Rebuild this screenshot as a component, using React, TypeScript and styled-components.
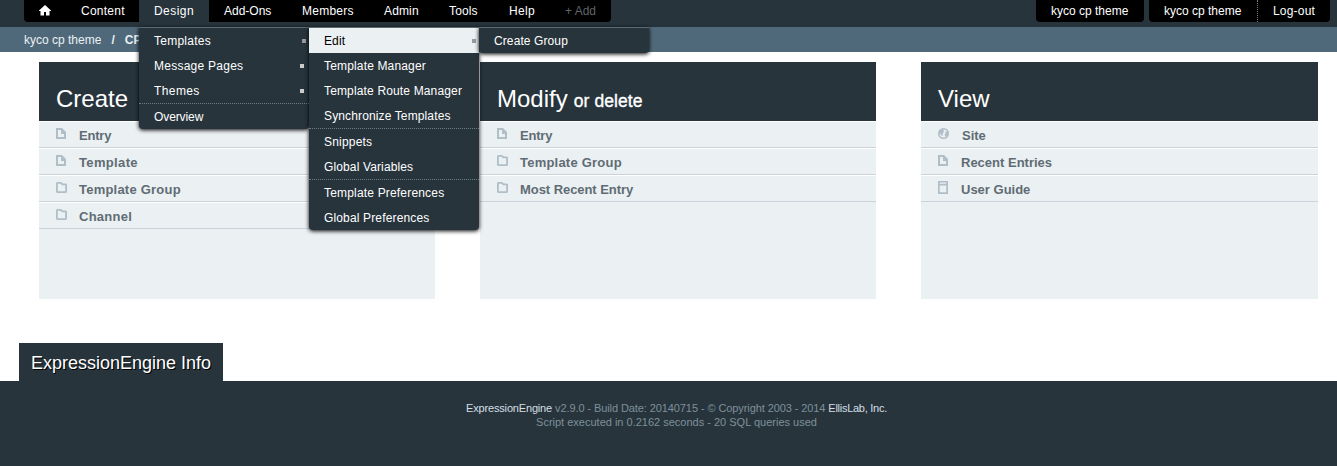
import React from 'react';
import styled, { createGlobalStyle, css } from 'styled-components';

const Global = createGlobalStyle`
  * { box-sizing: border-box; }
  body { margin: 0; background: #fff; font: 12px/25px "Liberation Sans", Arial, sans-serif; overflow: hidden; }
  a { color: inherit; text-decoration: none; }
  ul { list-style: none; margin: 0; padding: 0; }
`;

const Page = styled.div`
  height: 466px;
  display: flex;
  flex-direction: column;
  overflow: hidden;
`;
const TopBar = styled.header`
  height: 27px;
  flex: none;
  display: flex;
  justify-content: space-between;
  background: #27343c;
  padding: 0 7px 0 24px;
`;
const NavGroup = styled.ul`
  display: flex;
  height: 22px;
  background: #000;
  border-radius: 0 0 4px 4px;
`;
const NavItem = styled.li<{ $w: number; $open?: boolean; $muted?: boolean; $divided?: boolean }>`
  width: ${p => p.$w}px;
  height: ${p => (p.$open ? 27 : 22)}px;
  padding-left: 15px;
  line-height: 22px;
  position: relative;
  white-space: nowrap;
  color: ${p => (p.$muted ? '#5f6468' : '#fff')};
  ${p => p.$open && css`background: #27343c;`}
  ${p => p.$divided && css`border-left: 1px dotted #777;`}
`;
const Account = styled.div`
  display: flex;
  gap: 5px;
`;
const Text = styled.span<{ $ls?: number }>`
  letter-spacing: ${p => p.$ls ?? 0}px;
`;
const Menu = styled.ul<{ $x: number; $y: number; $w: number }>`
  position: absolute;
  left: ${p => p.$x}px;
  top: ${p => p.$y}px;
  width: ${p => p.$w}px;
  z-index: 5;
  background: #27343c;
  border-top: 1px solid #5b6970;
  border-radius: 0 0 4px 4px;
  box-shadow: 0 1px 4px #000;
`;
const MenuItem = styled.li<{ $active?: boolean; $divided?: boolean; $arrow?: 'idle' | 'open' }>`
  position: relative;
  height: ${p => (p.$divided ? 26 : 25)}px;
  padding-left: 15px;
  line-height: 27px;
  color: #fff;
  ${p => p.$active && css`background: #ebf0f3; color: #000;`}
  ${p => p.$divided && css`border-top: 1px dotted #6b7980;`}
  ${p => p.$arrow && css`
    &::after {
      content: '';
      position: absolute;
      top: 11px;
      right: ${p.$arrow === 'open' ? 3 : 5}px;
      width: 4px;
      height: 4px;
      background: ${p.$arrow === 'open' ? '#999' : '#ccc'};
    }
  `}
`;
const Crumbs = styled.nav`
  height: 25px;
  flex: none;
  display: flex;
  gap: 10px;
  padding-left: 24px;
  color: #ebf0f3;
  background: #50697a;
  line-height: 26px;
`;
const Panels = styled.main`
  flex: none;
  height: 291px;
  padding: 10px 19px 0 39px;
  display: grid;
  grid-template-columns: 396px 396px 397px;
  grid-template-rows: 237px;
  column-gap: 45px;
`;
const Panel = styled.section`
  background: #ebf0f3;
`;
const PanelTitle = styled.h2`
  margin: 0;
  height: 59px;
  padding: 22px 0 0 17px;
  background: #27343c;
  color: #fff;
  font-size: 24px;
  font-weight: 400;
  line-height: 30px;
  white-space: nowrap;
  small {
    margin-left: 1px;
    font-size: 17.500px;
    letter-spacing: .1px;
    -webkit-text-stroke: .35px #fff;
  }
`;
const Row = styled.li`
  height: 27px;
  display: flex;
  align-items: flex-start;
  padding-left: 17px;
  border-top: 1px solid #fff;
  border-bottom: 1px solid #cbd3da;
  color: #5f6c74;
  font-size: 13px;
  font-weight: 700;
  line-height: 27px;
`;
const IconBox = styled.span<{ $wide?: boolean }>`
  flex: none;
  width: ${p => (p.$wide ? 24 : 23)}px;
  height: 25px;
  svg { display: block; margin-top: 5px; }
`;
const InfoTab = styled.div`
  flex: none;
  width: 204px;
  height: 38px;
  margin-left: 19px;
  padding-left: 12px;
  background: #27343c;
  color: #fff;
  font-size: 18px;
  line-height: 40px;
  text-shadow: 1px 1px 0 #000;
  white-space: nowrap;
`;
const Footer = styled.footer`
  flex: 1;
  padding: 20px 0 0 16px;
  background: #27343c;
  color: #7f909a;
  font-size: 11px;
  line-height: 14px;
  text-align: center;
`;
const FooterLink = styled.a<{ $ls: number }>`
  color: #d5dfe5;
  letter-spacing: ${p => p.$ls}px;
`;

const HomeSlot = styled.div`
  padding-top: 5px;
  svg { display: block; }
`;
const HomeIcon = () => (
  <svg width="12" height="11" viewBox="0 0 12 11">
    <path fill="#fff" d="M6 0 12 5.500V6h-1.500v4.500H7V7H5v3.500H1.500V6H0v-.5z" />
  </svg>
);

type IconName = 'file' | 'folder' | 'globe' | 'book';
const Icon = ({ name }: { name: IconName }) => (
  <svg width="12" height="14" viewBox="0 0 12 14" fill="#b0bec8" fillRule="evenodd">
    {name === 'file' && <path d="M0 1h6l4 4v7H0zM2 3v7h6V7H5V3z" />}
    {name === 'folder' && <path d="M0 2l1-1h4l2 1.500h3l1 1V11l-1 1H1l-1-1zM1.800 2.800v7.400h7.400V4.300H6L4.500 2.800z" />}
    {name === 'globe' && (
      <>
        <circle cx="5.500" cy="6.500" r="4.700" fill="none" stroke="#b0bec8" strokeWidth="1.600" />
        <path d="M1 4.500 3 2.500h3L5.500 4 6 5.500 4.500 6l.5 2L4 9 2.500 7 1 6.500zM7.500 4.500 10 5v3L7.500 10 6.500 8l1-1.500z" />
      </>
    )}
    {name === 'book' && <path d="M0 0h10v13H0zM1.700 1.500v1.300h6.600V1.500zM1.700 4.500v6.800h6.600V4.500z" />}
  </svg>
);

type RowData = [icon: IconName, label: string, spacing: number];
const panels: { title: string; sub?: string; rows: RowData[] }[] = [
  {
    title: 'Create',
    rows: [['file', 'Entry', -0.2], ['file', 'Template', 0.35], ['folder', 'Template Group', 0.22], ['folder', 'Channel', 0.25]],
  },
  {
    title: 'Modify',
    sub: 'or delete',
    rows: [['file', 'Entry', -0.2], ['folder', 'Template Group', 0.22], ['folder', 'Most Recent Entry', -0.06]],
  },
  {
    title: 'View',
    rows: [['globe', 'Site', 0], ['file', 'Recent Entries', 0], ['book', 'User Guide', 0]],
  },
];

export default function App() {
  return (
    <Page>
      <Global />
      <TopBar>
        <NavGroup>
          <NavItem $w={42}><HomeSlot><HomeIcon /></HomeSlot></NavItem>
          <NavItem $w={73}><Text $ls={0.25}>Content</Text></NavItem>
          <NavItem $w={70} $open>
            <Text $ls={0.45}>Design</Text>
            <Menu $x={0} $y={27} $w={170}>
              <MenuItem $arrow="open">
                <Text $ls={0.25}>Templates</Text>
                <Menu $x={170} $y={-1} $w={170}>
                  <MenuItem $active $arrow="open">
                    <Text $ls={0.1}>Edit</Text>
                    <Menu $x={170} $y={-1} $w={170}>
                      <MenuItem><Text $ls={0.1}>Create Group</Text></MenuItem>
                    </Menu>
                  </MenuItem>
                  <MenuItem><Text $ls={0.16}>Template Manager</Text></MenuItem>
                  <MenuItem><Text $ls={0.15}>Template Route Manager</Text></MenuItem>
                  <MenuItem><Text $ls={0.13}>Synchronize Templates</Text></MenuItem>
                  <MenuItem $divided><Text $ls={0.2}>Snippets</Text></MenuItem>
                  <MenuItem><Text $ls={0.13}>Global Variables</Text></MenuItem>
                  <MenuItem $divided><Text $ls={0.18}>Template Preferences</Text></MenuItem>
                  <MenuItem><Text $ls={0.15}>Global Preferences</Text></MenuItem>
                </Menu>
              </MenuItem>
              <MenuItem $arrow="idle"><Text $ls={0.25}>Message Pages</Text></MenuItem>
              <MenuItem $arrow="idle"><Text $ls={0.4}>Themes</Text></MenuItem>
              <MenuItem $divided><Text $ls={-0.1}>Overview</Text></MenuItem>
            </Menu>
          </NavItem>
          <NavItem $w={78}><Text>Add-Ons</Text></NavItem>
          <NavItem $w={82}><Text $ls={0.25}>Members</Text></NavItem>
          <NavItem $w={65}><Text $ls={0.15}>Admin</Text></NavItem>
          <NavItem $w={60}><Text $ls={0.15}>Tools</Text></NavItem>
          <NavItem $w={56}><Text $ls={0.3}>Help</Text></NavItem>
          <NavItem $w={61} $muted><Text>+ Add</Text></NavItem>
        </NavGroup>
        <Account>
          <NavGroup><NavItem $w={108}><Text>kyco cp theme</Text></NavItem></NavGroup>
          <NavGroup>
            <NavItem $w={108}><Text>kyco cp theme</Text></NavItem>
            <NavItem $w={73} $divided><Text $ls={0.2}>Log-out</Text></NavItem>
          </NavGroup>
        </Account>
      </TopBar>
      <Crumbs>
        <Text>kyco cp theme</Text>
        <b>/</b>
        <b>CP</b>
      </Crumbs>
      <Panels>
        {panels.map(p => (
          <Panel key={p.title}>
            <PanelTitle>{p.title}{p.sub && <small> {p.sub}</small>}</PanelTitle>
            <ul>
              {p.rows.map(([icon, label, spacing]) => (
                <Row key={label}>
                  <IconBox $wide={icon === 'globe'}><Icon name={icon} /></IconBox>
                  <Text $ls={spacing}>{label}</Text>
                </Row>
              ))}
            </ul>
          </Panel>
        ))}
      </Panels>
      <InfoTab>ExpressionEngine Info</InfoTab>
      <Footer>
        <div>
          <FooterLink $ls={-0.17} href="#">ExpressionEngine</FooterLink>
          <Text $ls={-0.09}> v2.9.0 - Build Date: 20140715 - © Copyright 2003 - 2014 </Text>
          <FooterLink $ls={-0.27} href="#">EllisLab, Inc.</FooterLink>
        </div>
        <div>Script executed in 0.2162 seconds - 20 SQL queries used</div>
      </Footer>
    </Page>
  );
}
